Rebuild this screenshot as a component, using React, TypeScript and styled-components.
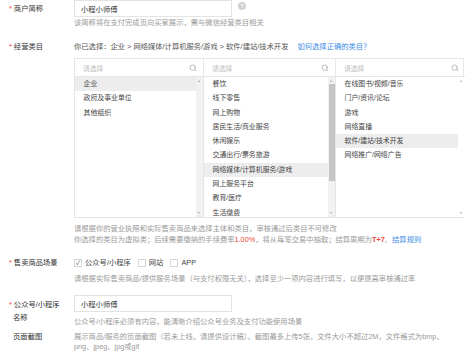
import React, { useState } from 'react';
import styled, { createGlobalStyle } from 'styled-components';
import { Search } from 'lucide-react';

const GlobalStyle = createGlobalStyle`
  html, body {
    margin: 0;
    padding: 0;
    background: #fff;
  }
  body {
    font-family: "Liberation Sans", "Noto Sans CJK SC", sans-serif;
    color: #333;
    font-size: 7.3px;
  }
`;

const categories = [
  { items: ['企业', '政府及事业单位', '其他组织'], selected: 0, thumb: null },
  {
    items: [
      '餐饮', '线下零售', '网上购物', '居民生活/商业服务', '休闲娱乐',
      '交通出行/票务旅游', '网络媒体/计算机服务/游戏', '网上服务平台', '教育/医疗', '生活缴费',
    ],
    selected: 6,
    thumb: { top: 7, height: 97 },
  },
  {
    items: ['在线图书/视频/音乐', '门户/资讯/论坛', '游戏', '网络直播', '软件/建站/技术开发', '网络推广/网络广告'],
    selected: 4,
    thumb: null,
  },
];

const Page = styled.div`
  width: 474px;
  height: 361px;
  overflow: hidden;
`;

const Row = styled.div<{ $mt?: number }>`
  display: grid;
  grid-template-columns: 74px 1fr;
  margin-top: ${({ $mt }) => $mt ?? 0}px;
`;

const Label = styled.div<{ $lh?: number; $pt?: number }>`
  padding-left: 9px;
  padding-top: ${({ $pt }) => $pt ?? 0}px;
  line-height: ${({ $lh }) => $lh ?? 12}px;
  font-size: 7.3px;
  color: #333;
  white-space: nowrap;
`;

const Star = styled.span`
  color: #f0443a;
  margin-right: 2px;
`;

const InputLine = styled.div`
  display: flex;
  align-items: center;
  gap: 6px;
`;

const TextInput = styled.div`
  width: 158px;
  height: 17px;
  box-sizing: border-box;
  border: 1px solid #e3e3e3;
  padding: 0 6px;
  display: flex;
  align-items: center;
  font-size: 7.3px;
  color: #333;
`;

const HelpIcon = styled.span`
  width: 8px;
  height: 8px;
  border-radius: 50%;
  background: #cfcfcf;
  color: #fff;
  font-size: 6px;
  font-weight: bold;
  display: inline-flex;
  align-items: center;
  justify-content: center;
  margin-top: -6px;
`;

const Hint = styled.div<{ $mt?: number; $lh?: number }>`
  margin-top: ${({ $mt }) => $mt ?? 0}px;
  line-height: ${({ $lh }) => $lh ?? 11}px;
  color: #9a9a9a;
  font-size: 7.3px;
  white-space: nowrap;
`;

const Chosen = styled.div`
  line-height: 12px;
  color: #555;
  white-space: nowrap;
`;

const Link = styled.span`
  color: #3c8ee6;
  margin-left: 9px;
`;

const Red = styled.span<{ $bold?: boolean }>`
  color: #f0443a;
  font-weight: ${({ $bold }) => ($bold ? 'bold' : 'normal')};
`;

const Blue = styled.span`
  color: #3c8ee6;
`;

const Picker = styled.div`
  margin-top: 5px;
  display: grid;
  grid-template-columns: 129px 132px 129px;
  width: 390px;
  height: 160px;
  box-sizing: border-box;
  border: 1px solid #e6e6e6;
`;

const Column = styled.div<{ $last?: boolean }>`
  display: flex;
  flex-direction: column;
  border-right: ${({ $last }) => ($last ? 'none' : '1px solid #e6e6e6')};
  min-height: 0;
`;

const SearchBox = styled.div`
  height: 17px;
  flex-shrink: 0;
  border-bottom: 1px solid #e6e6e6;
  display: flex;
  align-items: center;
  justify-content: space-between;
  padding: 0 6px 0 8px;
  color: #bdbdbd;
  font-size: 6.8px;
`;

const ListArea = styled.div`
  flex: 1;
  display: flex;
  min-height: 0;
  overflow: hidden;
`;

const List = styled.div`
  flex: 1;
  overflow: hidden;
`;

const Item = styled.div<{ $active: boolean }>`
  height: 14.3px;
  line-height: 14.3px;
  padding-left: 8.5px;
  font-size: 6.9px;
  color: #444;
  white-space: nowrap;
  background: ${({ $active }) => ($active ? '#ededed' : 'transparent')};
`;

const Track = styled.div<{ $shade: boolean }>`
  width: 7px;
  position: relative;
  background: ${({ $shade }) => ($shade ? '#f1f1f1' : '#fff')};
`;

const Arrow = styled.span<{ $down?: boolean }>`
  position: absolute;
  left: 2px;
  ${({ $down }) => ($down ? 'bottom: 3px;' : 'top: 3px;')}
  width: 0;
  height: 0;
  border-left: 1.5px solid transparent;
  border-right: 1.5px solid transparent;
  ${({ $down }) => ($down ? 'border-top: 2px solid #a8a8a8;' : 'border-bottom: 2px solid #a8a8a8;')}
`;

const Thumb = styled.div`
  position: absolute;
  left: 0.5px;
  right: 0.5px;
  background: #c6c6c6;
`;

const Checks = styled.div`
  display: flex;
  align-items: center;
  line-height: 12px;
`;

const CheckItem = styled.label`
  display: inline-flex;
  align-items: center;
  margin-right: 7px;
  color: #444;
  cursor: pointer;
`;

const Box = styled.span`
  width: 8px;
  height: 8px;
  box-sizing: border-box;
  border: 1px solid #d6d6d6;
  margin-right: 3px;
  display: inline-flex;
  align-items: center;
  justify-content: center;
  color: #555;
  font-size: 6px;
`;

const App: React.FC = () => {
  const [checked, setChecked] = useState([true, false, false]);
  const scenes = ['公众号/小程序', '网站', 'APP'];

  return (
    <Page>
      <GlobalStyle />
      <Row>
        <Label $lh={17}><Star>*</Star>商户简称</Label>
        <div>
          <InputLine>
            <TextInput>小程小师傅</TextInput>
            <HelpIcon>?</HelpIcon>
          </InputLine>
          <Hint $mt={1} $lh={10}>该简称将在支付完成页向买家展示，需与微信经营类目相关</Hint>
        </div>
      </Row>

      <Row $mt={13}>
        <Label><Star>*</Star>经营类目</Label>
        <div>
          <Chosen>
            你已选择：企业 &gt; 网络媒体/计算机服务/游戏 &gt; 软件/建站/技术开发
            <Link>如何选择正确的类目？</Link>
          </Chosen>
          <Picker>
            {categories.map((col, ci) => (
              <Column key={ci} $last={ci === categories.length - 1}>
                <SearchBox>
                  请选择
                  <Search size={8} color="#9a9a9a" strokeWidth={2} />
                </SearchBox>
                <ListArea>
                  <List>
                    {col.items.map((it, i) => (
                      <Item key={it} $active={i === col.selected}>{it}</Item>
                    ))}
                  </List>
                  <Track $shade={ci !== 2}>
                    <Arrow />
                    {col.thumb && (
                      <Thumb style={{ top: col.thumb.top, height: col.thumb.height }} />
                    )}
                    <Arrow $down />
                  </Track>
                </ListArea>
              </Column>
            ))}
          </Picker>
          <Hint $mt={4.5}>请根据你的营业执照和实际售卖商品来选择主体和类目，审核通过后类目不可修改</Hint>
          <Hint>
            你选择的类目为虚拟类；后续需要缴纳的手续费率<Red>1.00%</Red>，将从每笔交易中抽取；结算周期为<Red $bold>T+7</Red>。<Blue>结算规则</Blue>
          </Hint>
        </div>
      </Row>

      <Row $mt={12.5}>
        <Label><Star>*</Star>售卖商品场景</Label>
        <div>
          <Checks>
            {scenes.map((s, i) => (
              <CheckItem
                key={s}
                onClick={() => setChecked(checked.map((c, j) => (j === i ? !c : c)))}
              >
                <Box>{checked[i] ? '✓' : ''}</Box>
                {s}
              </CheckItem>
            ))}
          </Checks>
          <Hint $mt={3.5}>请根据实际售卖商品/提供服务场景（与支付权限无关），选择至少一项内容进行填写，以便提高审核通过率</Hint>
        </div>
      </Row>

      <Row $mt={11.5}>
        <Label $lh={13} $pt={2.5}><Star>*</Star>公众号/小程序<br />&nbsp;&nbsp;名称</Label>
        <div>
          <TextInput>小程小师傅</TextInput>
          <Hint $mt={3.5}>公众号/小程序必须有内容，能清晰介绍公众号业务及支付功能使用场景</Hint>
        </div>
      </Row>

      <Row $mt={5.5}>
        <Label $lh={10}>&nbsp;&nbsp;页面截图</Label>
        <div>
          <Hint $lh={10}>展示商品/服务的页面截图（若未上线，请提供设计稿）。截图最多上传5张，文件大小不超过2M，文件格式为bmp、</Hint>
          <Hint $lh={10}>png、jpeg、jpg或gif</Hint>
        </div>
      </Row>
    </Page>
  );
};

export default App;
